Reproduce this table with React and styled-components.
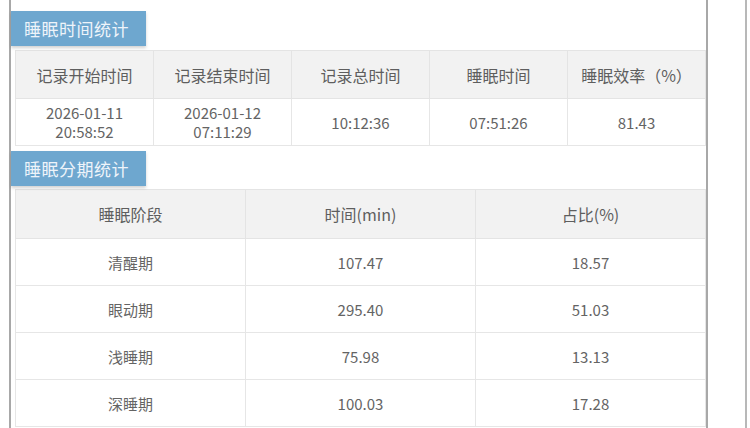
import React from 'react';
import styled, { createGlobalStyle } from 'styled-components';

const GlobalStyle = createGlobalStyle`
  html, body {
    margin: 0;
    padding: 0;
    background: #fff;
  }
  body {
    font-family: "Noto Sans CJK SC", "Noto Sans", sans-serif;
    color: #606060;
  }
`;

const Page = styled.div`
  display: flex;
  height: 428px;
  overflow: hidden;
`;

const Panel = styled.div`
  margin-left: 9px;
  width: 699px;
  border-left: 2px solid #a8a8a8;
  border-right: 2px solid #a8a8a8;
  padding: 11px 0 0 0;
  box-sizing: border-box;
`;

const EdgeLine = styled.div`
  margin-left: 37px;
  width: 2px;
  background: #b8b8b8;
`;

const Tab = styled.div`
  display: inline-flex;
  align-items: center;
  height: 35px;
  width: 135px;
  box-sizing: border-box;
  padding-left: 13px;
  background: #6ea7cf;
  color: #eef4fa;
  font-size: 17px;
  letter-spacing: 0.5px;
  box-shadow: 0 2px 3px rgba(0, 0, 0, 0.18);
`;

const Section = styled.div`
  margin-bottom: ${(p) => p.$gap || 0}px;
`;

const Table = styled.table`
  width: 691px;
  margin: ${(p) => p.$top}px 0 0 4px;
  border-collapse: collapse;
  table-layout: fixed;
  font-size: 15px;
  color: #606060;
`;

const Th = styled.th`
  height: ${(p) => p.$h}px;
  padding: 0;
  background: #f2f2f2;
  font-weight: normal;
  font-size: 16px;
  color: #5e5e5e;
  border: 1px solid #e4e4e4;
  text-align: center;
`;

const Td = styled.td`
  height: ${(p) => p.$h}px;
  padding: 0;
  border: 1px solid #e6e6e6;
  text-align: center;
  line-height: 19px;
  color: #646464;
`;

const timeHead = ['记录开始时间', '记录结束时间', '记录总时间', '睡眠时间', '睡眠效率（%）'];
const timeRow = [['2026-01-11', '20:58:52'], ['2026-01-12', '07:11:29'], ['10:12:36'], ['07:51:26'], ['81.43']];

const stageHead = ['睡眠阶段', '时间(min)', '占比(%)'];
const stageRows = [
  ['清醒期', '107.47', '18.57'],
  ['眼动期', '295.40', '51.03'],
  ['浅睡期', '75.98', '13.13'],
  ['深睡期', '100.03', '17.28'],
];

export default function App() {
  return (
    <>
      <GlobalStyle />
      <Page>
        <Panel>
          <Section $gap={5}>
            <Tab>睡眠时间统计</Tab>
            <Table $top={4}>
              <thead>
                <tr>
                  {timeHead.map((h) => (
                    <Th key={h} $h={47}>{h}</Th>
                  ))}
                </tr>
              </thead>
              <tbody>
                <tr>
                  {timeRow.map((lines, i) => (
                    <Td key={i} $h={46}>
                      {lines.map((l) => (
                        <div key={l}>{l}</div>
                      ))}
                    </Td>
                  ))}
                </tr>
              </tbody>
            </Table>
          </Section>
          <Section>
            <Tab>睡眠分期统计</Tab>
            <Table $top={3}>
              <thead>
                <tr>
                  {stageHead.map((h) => (
                    <Th key={h} $h={48}>{h}</Th>
                  ))}
                </tr>
              </thead>
              <tbody>
                {stageRows.map((row) => (
                  <tr key={row[0]}>
                    {row.map((c, i) => (
                      <Td key={i} $h={46}>{c}</Td>
                    ))}
                  </tr>
                ))}
              </tbody>
            </Table>
          </Section>
        </Panel>
        <EdgeLine />
      </Page>
    </>
  );
}
